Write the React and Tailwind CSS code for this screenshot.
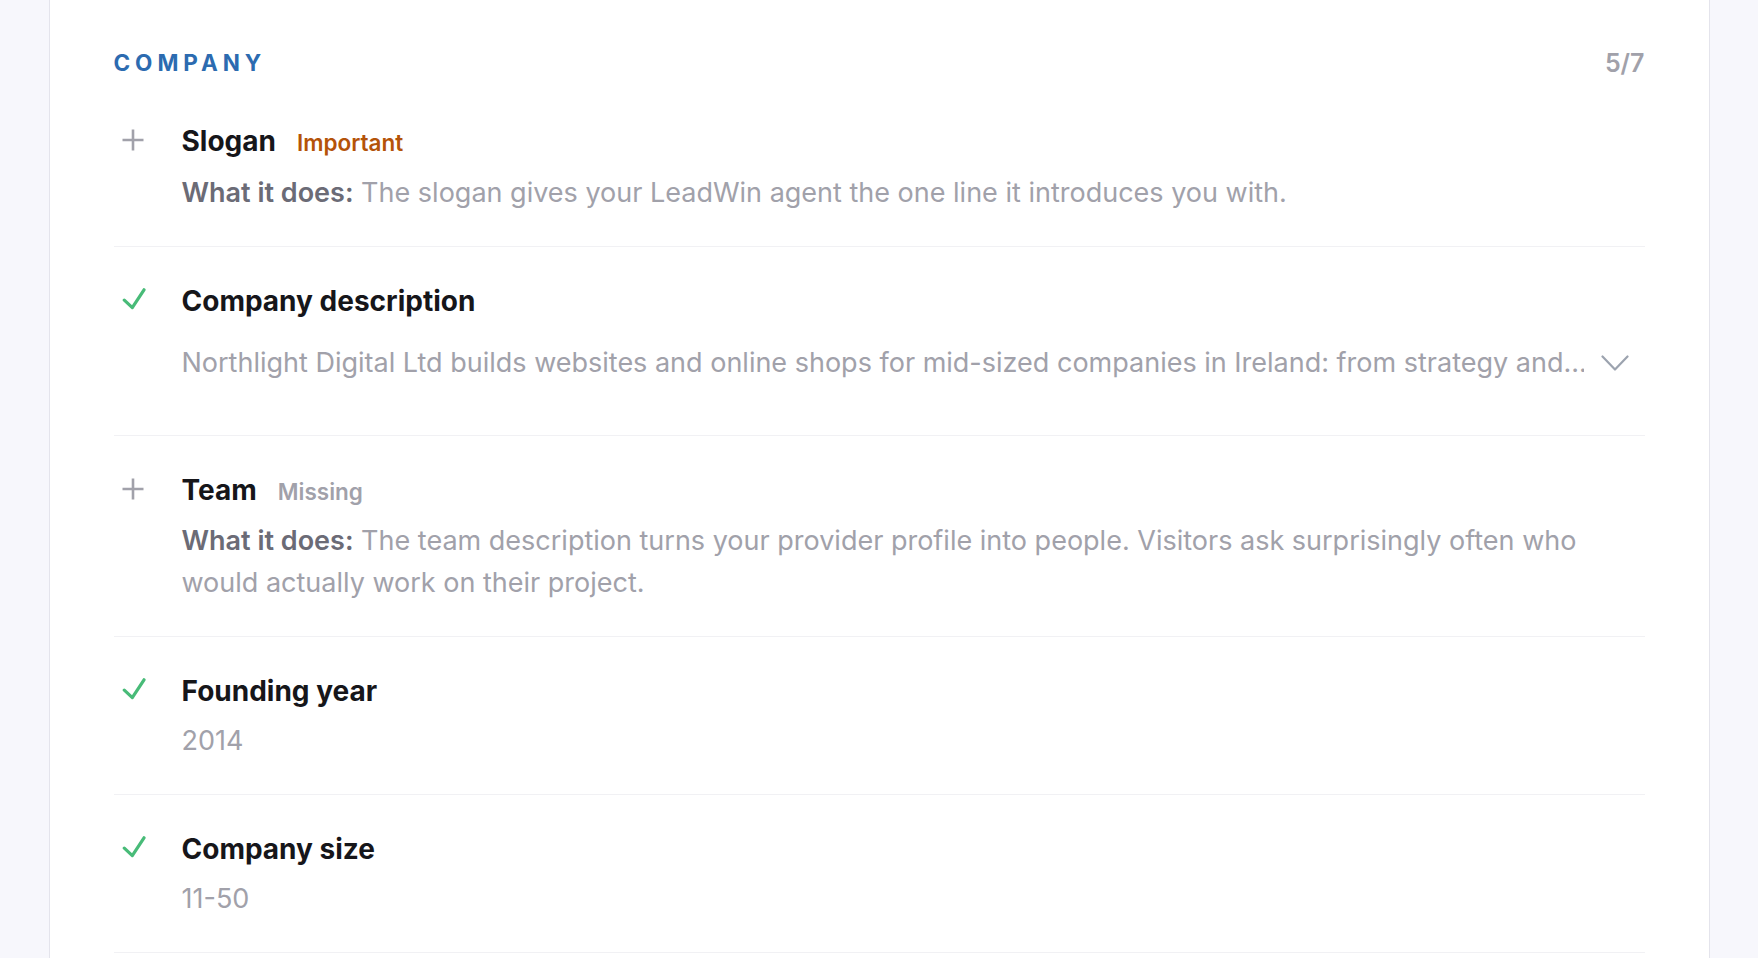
import React from "react";

function PlusIcon() {
  return (
    <svg width="22" height="22" viewBox="0 0 22 22" fill="none" className="block -mt-[2px]">
      <path d="M11 0.5 V21.5 M0.5 11 H21.5" stroke="#a1a1aa" strokeWidth="2.6" />
    </svg>
  );
}

function CheckIcon() {
  return (
    <svg width="24" height="22" viewBox="0 0 24 22" fill="none" className="block -mt-[4px]">
      <path d="M2.3 12.2 L10.3 19.6 L22 1.8" stroke="#48bb78" strokeWidth="3.2" strokeLinecap="round" strokeLinejoin="round" />
    </svg>
  );
}

function ChevronDown() {
  return (
    <svg width="28" height="17" viewBox="0 0 28 17" fill="none" className="block shrink-0">
      <path d="M1.5 1.5 L14 14.5 L26.5 1.5" stroke="#9ca3af" strokeWidth="2.2" strokeLinecap="round" strokeLinejoin="round" />
    </svg>
  );
}

function Row({ icon, title, label, labelClass, children }) {
  return (
    <div className="flex border-b border-[#f1f1f4] pt-[36px] pb-[32px]">
      <div className="w-[68px] shrink-0 pl-[8px] h-[36px] flex items-center">
        {icon === "plus" ? <PlusIcon /> : <CheckIcon />}
      </div>
      <div className="flex-1 min-w-0">
        <div className="flex items-baseline gap-[21px]">
          <span className="text-[28px] leading-[36px] font-bold text-[#16161a]">{title}</span>
          {label && <span className={"text-[22.5px] leading-[36px] font-semibold " + labelClass}>{label}</span>}
        </div>
        {children}
      </div>
    </div>
  );
}

export default function App() {
  return (
    <div className="h-screen w-full overflow-hidden bg-[#f7f7fc]" style={{ fontFamily: "Inter, 'Noto Sans', sans-serif" }}>
      <div className="mx-auto w-[1661px] h-full bg-white border-x border-[#e4e4ec] px-[64px] pt-[48px]">
        <div className="flex items-center justify-between h-[30px] mb-[9px]">
          <span className="text-[22.5px] leading-[30px] font-bold tracking-[0.22em] text-[#2c6bb0]">COMPANY</span>
          <span className="text-[25px] leading-[30px] font-semibold text-[#a1a1aa]">5/7</span>
        </div>

        <Row icon="plus" title="Slogan" label="Important" labelClass="text-[#b45309]">
          <p className="mt-[11px] text-[27px] leading-[42px] text-[#a1a1aa]">
            <span className="font-semibold text-[#6b6b76]">What it does:</span> The slogan gives your LeadWin agent the one line it introduces you with.
          </p>
        </Row>

        <Row icon="check" title="Company description">
          <div className="mt-[11px] pt-[12px] pb-[19px] flex items-center gap-[17px] pr-[16px] cursor-pointer">
            <p className="flex-1 min-w-0 whitespace-nowrap overflow-hidden text-[27px] leading-[42px] text-[#a1a1aa]">
              Northlight Digital Ltd builds websites and online shops for mid-sized companies in Ireland: from strategy and...
            </p>
            <ChevronDown />
          </div>
        </Row>

        <Row icon="plus" title="Team" label="Missing" labelClass="text-[#a1a1aa]">
          <p className="mt-[10px] text-[27px] leading-[42px] text-[#a1a1aa]">
            <span className="font-semibold text-[#6b6b76]">What it does:</span> The team description turns your provider profile into people. Visitors ask surprisingly often who would actually work on their project.
          </p>
        </Row>

        <Row icon="check" title="Founding year">
          <p className="mt-[11px] text-[27px] leading-[42px] text-[#a1a1aa]">2014</p>
        </Row>

        <Row icon="check" title="Company size">
          <p className="mt-[11px] text-[27px] leading-[42px] text-[#a1a1aa]">11-50</p>
        </Row>
      </div>
    </div>
  );
}
